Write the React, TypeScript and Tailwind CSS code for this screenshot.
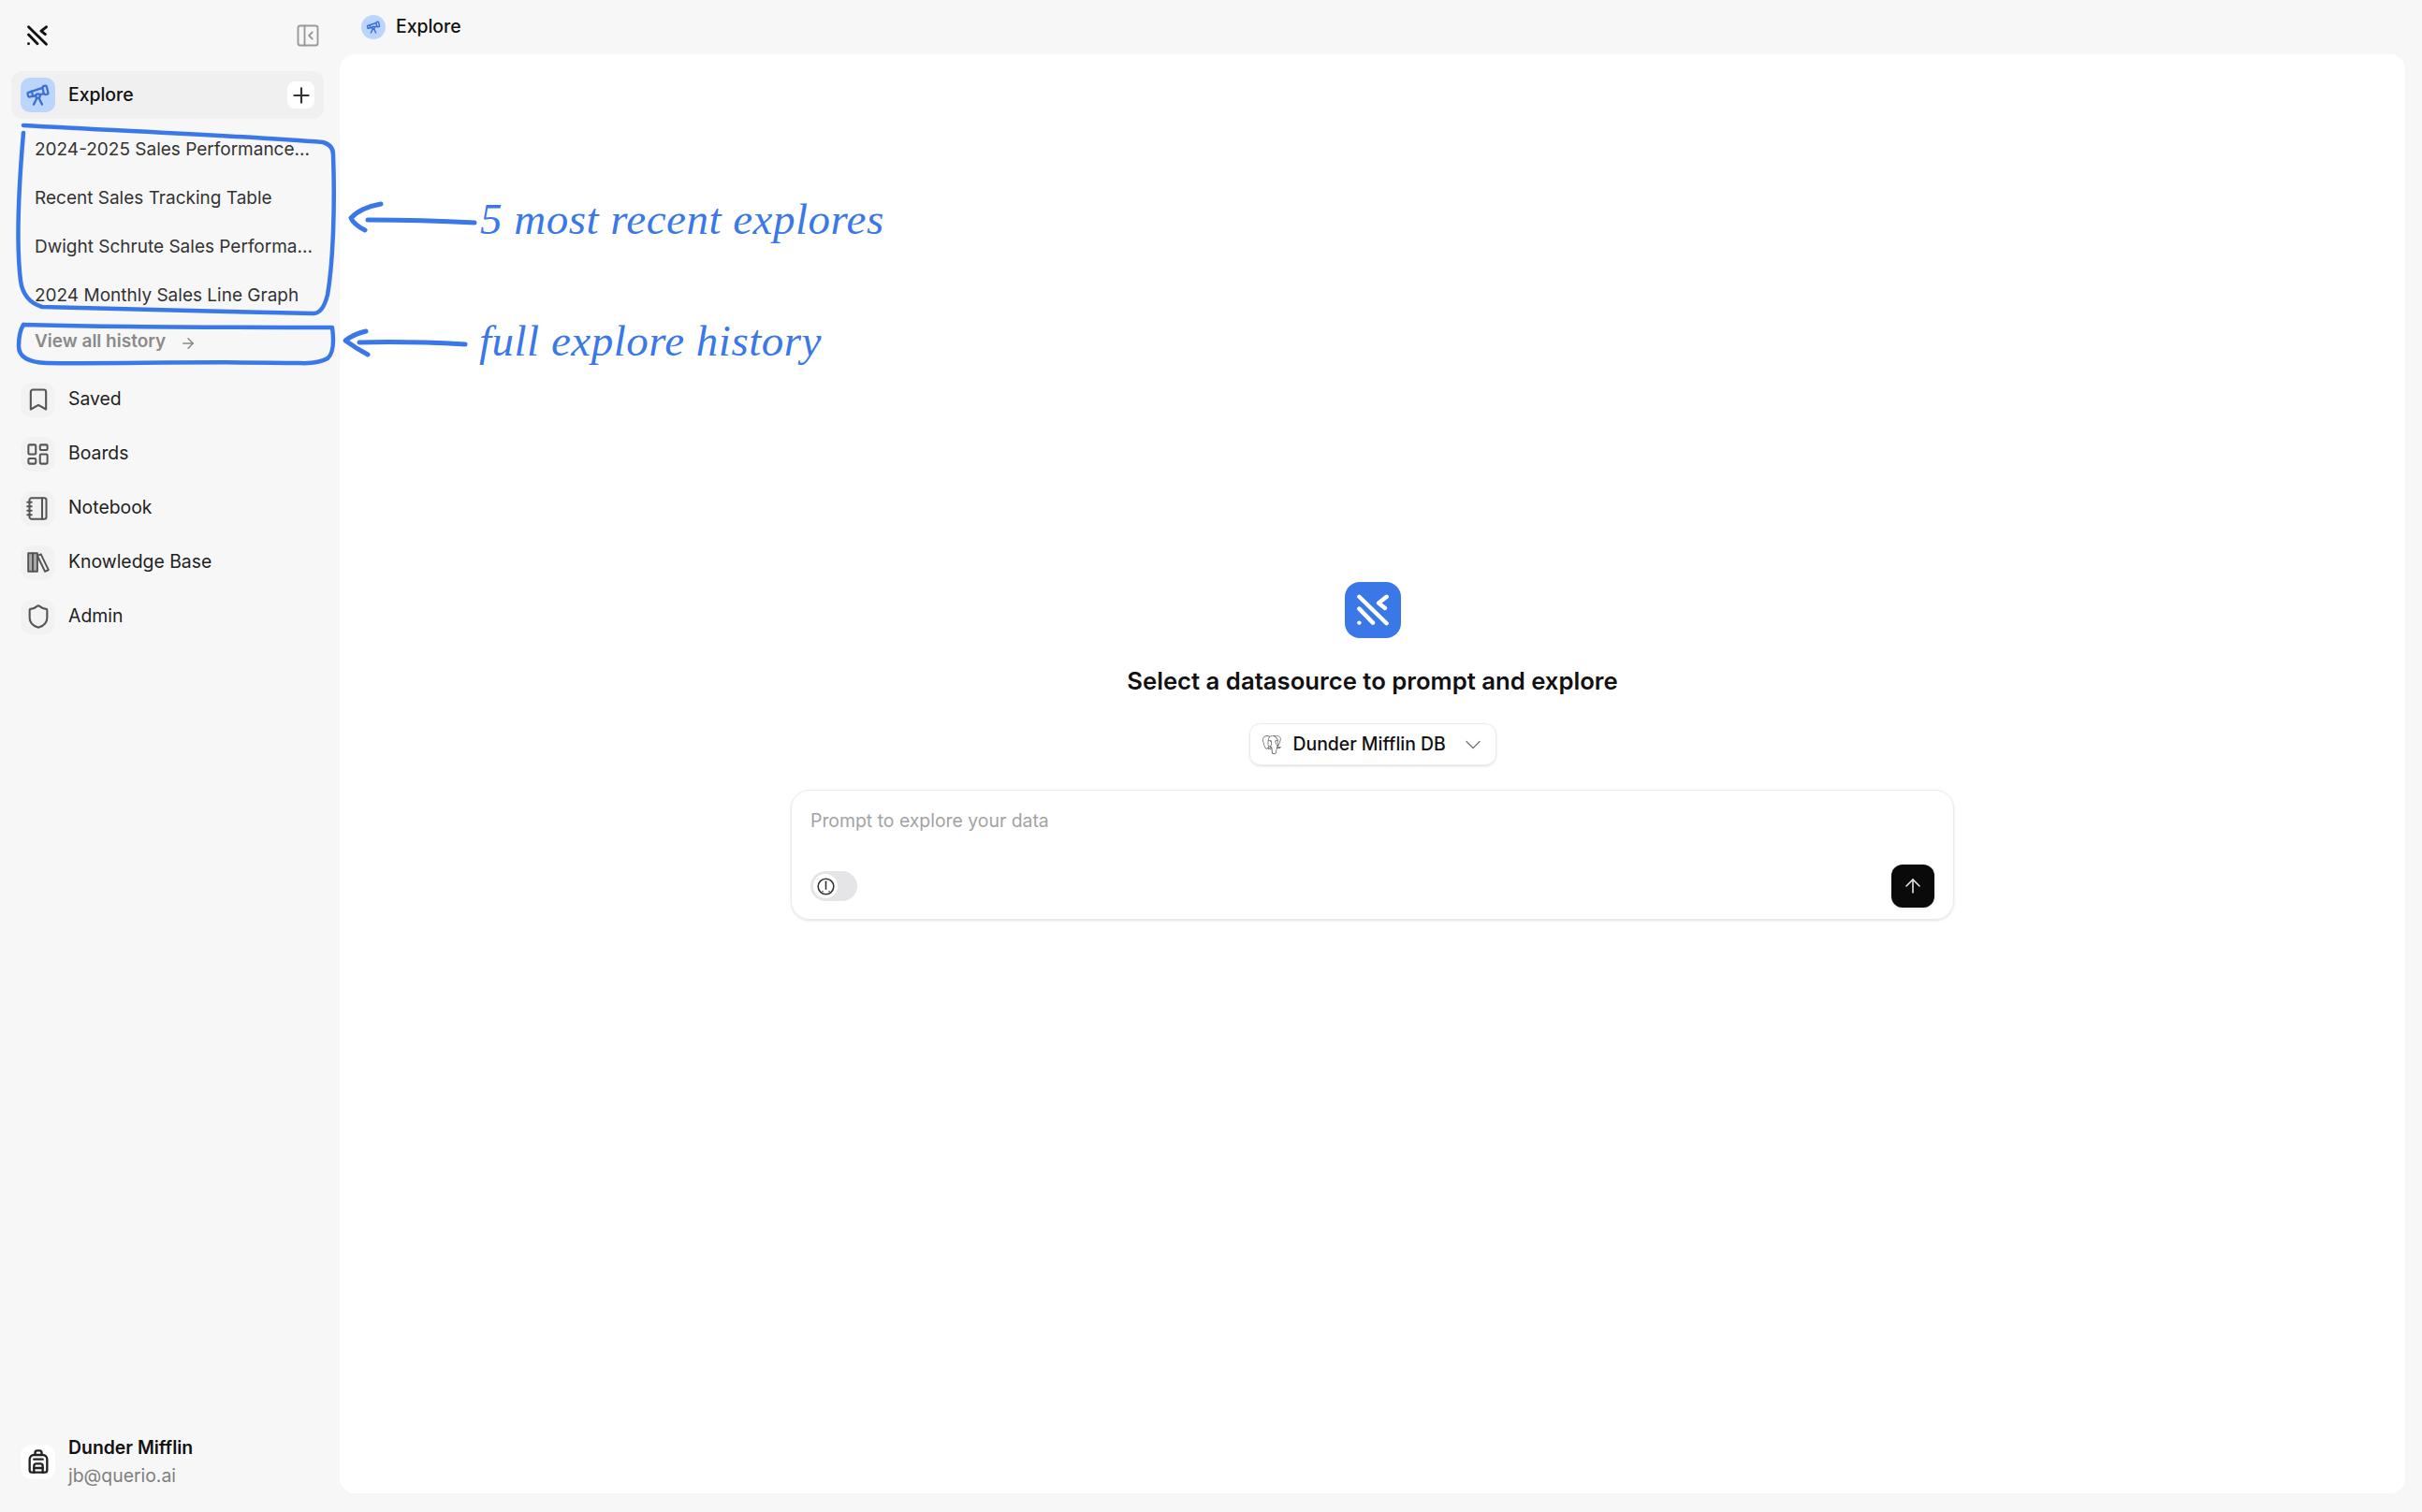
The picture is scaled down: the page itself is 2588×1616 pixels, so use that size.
import { ArrowRight, ArrowUp, Backpack, Bookmark, ChevronDown, LayoutDashboard, Notebook, PanelLeftClose, Plus, Shield, Telescope } from "lucide-react";
import { SiPostgresql } from "react-icons/si";

const recents = [
  "2024-2025 Sales Performance...",
  "Recent Sales Tracking Table",
  "Dwight Schrute Sales Performa...",
  "2024 Monthly Sales Line Graph",
];

function BooksIcon({ className }: { className: string }) {
  return (
    <svg viewBox="0 0 24 24" className={className} fill="none" stroke="currentColor" strokeWidth="1.8" strokeLinejoin="round">
      <rect x="2" y="3" width="4.5" height="18" fill="currentColor" fillOpacity="0.45" />
      <rect x="6.5" y="3" width="4.5" height="18" fill="currentColor" fillOpacity="0.45" />
      <path d="M11 5.5 14.5 4 22 19.5 18.5 21Z" />
    </svg>
  );
}

const navItems = [
  { label: "Saved", icon: Bookmark, size: "w-[28px] h-[28px]" },
  { label: "Boards", icon: LayoutDashboard, size: "w-[27px] h-[27px]" },
  { label: "Notebook", icon: Notebook, size: "w-[27px] h-[27px]" },
  { label: "Knowledge Base", icon: BooksIcon, size: "w-[26px] h-[26px]" },
  { label: "Admin", icon: Shield, size: "w-[28px] h-[28px]" },
];

function Logo({ className }: { className: string }) {
  return (
    <svg viewBox="0 0 100 100" className={className} fill="none" stroke="currentColor" strokeWidth="13" strokeLinecap="round" strokeLinejoin="round">
      <path d="M7 8 93 92" />
      <path d="M7 46 50 90" />
      <path d="M7 90h.01" />
      <path d="M93 8 68 28 88 44" />
    </svg>
  );
}

function Annotations() {
  return (
    <>
      <svg className="absolute top-0 left-0 w-[1000px] h-[420px] pointer-events-none" viewBox="0 0 1000 420" fill="none" stroke="#3b78e7" strokeLinecap="round" strokeLinejoin="round">
        <path strokeWidth="4.5" d="M25 134C130 140 260 145 345 152Q356 155 356 165C358 220 356 280 350 315Q345 335 335 335C240 333 130 330 45 328Q25 322 22 300C17 260 20 200 25 142" />
        <path strokeWidth="4.5" d="M25 347C130 350 260 350 355 350C357 365 356 378 350 383Q340 389 320 388C220 386 120 389 50 388Q20 387 20 370C20 360 22 352 25 347" />
        <path strokeWidth="5" d="M407 218Q385 222 375 233Q378 240 390 246" />
        <path strokeWidth="5" d="M393 235C430 235 470 236 507 238" />
        <path strokeWidth="5" d="M391 354Q378 357 369 364Q380 372 393 379" />
        <path strokeWidth="5" d="M384 366C420 365 460 366 497 368" />
      </svg>
      <span className="absolute top-[209px] left-[513px] font-['Liberation_Serif',serif] italic text-[47px] leading-[50px] tracking-[0.5px] text-[#3b78e7] whitespace-nowrap">5 most recent explores</span>
      <span className="absolute top-[339px] left-[512px] font-['Liberation_Serif',serif] italic text-[47px] leading-[50px] tracking-[0.5px] text-[#3b78e7] whitespace-nowrap">full explore history</span>
    </>
  );
}

export default function App() {
  return (
    <div className="relative h-[1616px] w-[2588px] flex overflow-hidden bg-[#f7f7f7] font-['Inter',sans-serif] text-[#111111]">
      <aside className="w-[363px] shrink-0 flex flex-col px-3 pb-[24px]">
        <div className="h-[76px] flex items-center justify-between pl-[17px] pr-[8px]">
          <Logo className="w-[22px] h-[22px] text-[#111111]" />
          <PanelLeftClose className="w-[28px] h-[28px] text-[#999999]" strokeWidth={1.6} />
        </div>
        <div className="h-[51px] w-[334px] flex items-center rounded-xl bg-[#f0f0f0] pl-[10px] pr-[10px]">
          <div className="w-[37px] h-[37px] rounded-[10px] bg-[#bcd5ff] flex items-center justify-center">
            <Telescope className="w-[27px] h-[27px] text-[#3b6fd4]" strokeWidth={2} />
          </div>
          <span className="ml-[14px] text-[19.4px] font-medium">Explore</span>
          <div className="ml-auto w-[29px] h-[29px] rounded-lg bg-white flex items-center justify-center">
            <Plus className="w-[26px] h-[26px] text-[#333333]" strokeWidth={2} />
          </div>
        </div>
        <ul className="mt-[7px] pl-[25px]">
          {recents.map((item) => (
            <li key={item} className="h-[52px] flex items-center whitespace-nowrap text-[19px] text-[#333333]">
              {item}
            </li>
          ))}
        </ul>
        <div className="h-[47px] pl-[25px] flex items-center gap-[15px] text-[19px] font-semibold text-[#8a8a8a]">
          View all history
          <ArrowRight className="w-[18px] h-[18px] mt-[2px]" />
        </div>
        <nav className="mt-[9px] flex flex-col">
          {navItems.map(({ label, icon: Icon, size }) => (
            <div key={label} className="h-[58px] flex items-center pl-[10px]">
              <div className="w-[37px] h-[37px] rounded-[12px] bg-[#f2f2f2] flex items-center justify-center">
                <Icon className={`${size} text-[#555555]`} strokeWidth={1.8} />
              </div>
              <span className="ml-[14px] text-[19.4px] text-[#222222]">{label}</span>
            </div>
          ))}
        </nav>
        <div className="mt-auto flex items-center pl-[10px]">
          <div className="w-[37px] h-[37px] rounded-[12px] bg-white flex items-center justify-center">
            <Backpack className="w-[28px] h-[28px] text-[#222222]" strokeWidth={2} />
          </div>
          <div className="ml-[14px] flex flex-col">
            <span className="text-[19.4px] leading-[30px] font-semibold">Dunder Mifflin</span>
            <span className="text-[19.4px] leading-[30px] text-[#808080]">jb@querio.ai</span>
          </div>
        </div>
      </aside>

      <div className="flex-1 flex flex-col pr-[18px] pb-[20px]">
        <header className="h-[58px] shrink-0 flex items-center pl-[23px]">
          <div className="w-[26px] h-[26px] rounded-full bg-[#bcd5ff] flex items-center justify-center">
            <Telescope className="w-[16px] h-[16px] text-[#3b6fd4]" strokeWidth={2.2} />
          </div>
          <span className="ml-[11px] text-[19.4px] font-medium">Explore</span>
        </header>
        <main className="flex-1 rounded-2xl bg-white flex flex-col items-center justify-center pb-[49px]">
          <div className="w-[60px] h-[60px] rounded-[16px] bg-[#3b78e7] flex items-center justify-center">
            <Logo className="w-[34px] h-[34px] text-white" />
          </div>
          <h1 className="mt-[28px] text-[25.7px] leading-[36px] font-semibold">Select a datasource to prompt and explore</h1>
          <button className="mt-[27px] w-[264px] h-[45px] rounded-xl border border-[#ebebeb] shadow-sm flex items-center pl-[13px] pr-[10px]">
            <SiPostgresql className="w-[20px] h-[20px] text-[#444444]" />
            <span className="ml-[13px] text-[19.4px] font-medium">Dunder Mifflin DB</span>
            <ChevronDown className="ml-auto w-[28px] h-[28px] text-[#777777]" strokeWidth={1.2} />
          </button>
          <div className="mt-[26px] w-[1243px] h-[139px] rounded-[20px] border border-[#ebebeb] shadow-sm flex flex-col px-[20px] pt-[18px] pb-[12px]">
            <p className="text-[19.4px] leading-[28px] text-[#a3a3a3]">Prompt to explore your data</p>
            <div className="mt-auto flex items-center justify-between">
              <div className="w-[50px] h-[32px] rounded-full bg-[#e5e5e7] p-[3px]">
                <div className="w-[26px] h-[26px] rounded-full bg-white flex items-center justify-center">
                  <svg viewBox="0 0 24 24" className="w-[21px] h-[21px] text-[#333333]" fill="none" stroke="currentColor" strokeWidth="1.8" strokeLinecap="round">
                    <circle cx="12" cy="12" r="9.5" />
                    <path d="M12 6v9" />
                    <path d="M8 18h.01" />
                    <path d="M16 18h.01" />
                  </svg>
                </div>
              </div>
              <div className="w-[46px] h-[46px] rounded-xl bg-[#0a0a0a] shadow-sm flex items-center justify-center">
                <ArrowUp className="w-[24px] h-[24px] text-[#e5e5e5]" strokeWidth={1.6} />
              </div>
            </div>
          </div>
        </main>
      </div>
      <Annotations />
    </div>
  );
}
